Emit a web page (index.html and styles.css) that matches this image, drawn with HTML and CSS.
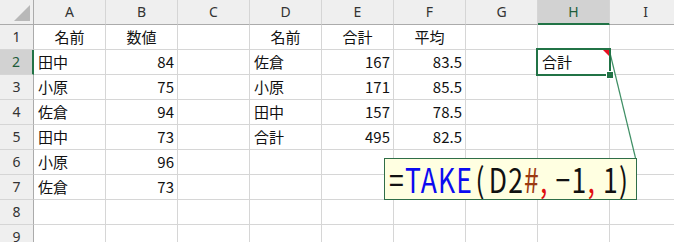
FILE: index.html
```html
<!DOCTYPE html>
<html lang="ja">
<head>
<meta charset="utf-8">
<title>TAKE</title>
<link rel="stylesheet" href="styles.css">
</head>
<body>
<div class="sheet">
  <div class="grid">
    <div class="hd corner"><span class="tri"></span></div>
    <div class="hd col">A</div>
    <div class="hd col">B</div>
    <div class="hd col">C</div>
    <div class="hd col">D</div>
    <div class="hd col">E</div>
    <div class="hd col">F</div>
    <div class="hd col">G</div>
    <div class="hd col sel-col">H</div>
    <div class="hd col">I</div>

    <div class="hd row">1</div>
    <div class="c ctr">名前</div><div class="c ctr">数値</div><div class="c"></div><div class="c ctr">名前</div><div class="c ctr">合計</div><div class="c ctr">平均</div><div class="c"></div><div class="c"></div><div class="c"></div>

    <div class="hd row sel-row">2</div>
    <div class="c">田中</div><div class="c num">84</div><div class="c"></div><div class="c">佐倉</div><div class="c num">167</div><div class="c num">83.5</div><div class="c"></div><div class="c">合計</div><div class="c"></div>

    <div class="hd row">3</div>
    <div class="c">小原</div><div class="c num">75</div><div class="c"></div><div class="c">小原</div><div class="c num">171</div><div class="c num">85.5</div><div class="c"></div><div class="c"></div><div class="c"></div>

    <div class="hd row">4</div>
    <div class="c">佐倉</div><div class="c num">94</div><div class="c"></div><div class="c">田中</div><div class="c num">157</div><div class="c num">78.5</div><div class="c"></div><div class="c"></div><div class="c"></div>

    <div class="hd row">5</div>
    <div class="c">田中</div><div class="c num">73</div><div class="c"></div><div class="c">合計</div><div class="c num">495</div><div class="c num">82.5</div><div class="c"></div><div class="c"></div><div class="c"></div>

    <div class="hd row">6</div>
    <div class="c">小原</div><div class="c num">96</div><div class="c"></div><div class="c"></div><div class="c"></div><div class="c"></div><div class="c"></div><div class="c"></div><div class="c"></div>

    <div class="hd row">7</div>
    <div class="c">佐倉</div><div class="c num">73</div><div class="c"></div><div class="c"></div><div class="c"></div><div class="c"></div><div class="c"></div><div class="c"></div><div class="c"></div>

    <div class="hd row">8</div>
    <div class="c"></div><div class="c"></div><div class="c"></div><div class="c"></div><div class="c"></div><div class="c"></div><div class="c"></div><div class="c"></div><div class="c"></div>

    <div class="hd row">9</div>
    <div class="c"></div><div class="c"></div><div class="c"></div><div class="c"></div><div class="c"></div><div class="c"></div><div class="c"></div><div class="c"></div><div class="c"></div>
  </div>

  <div class="selection"><span class="comment-mark"></span><span class="handle"></span></div>

  <svg class="connector" width="674" height="242" viewBox="0 0 674 242">
    <line x1="610" y1="53" x2="635.5" y2="158" stroke="#3f8f65" stroke-width="1.2"/>
    <line x1="610" y1="50" x2="610" y2="60" stroke="#217346" stroke-width="2"/>
  </svg>

  <div class="comment">
    <span class="formula"><span class="k">=</span><span class="fn">TAKE</span><span class="k paren">(</span><span class="k">D2</span><span class="hash">#</span><span class="sep">,</span><span class="k"> −1</span><span class="sep">,</span><span class="k"> 1)</span></span>
  </div>
</div>
</body>
</html>
```
FILE: styles.css
```css
* { box-sizing: border-box; }
html, body { margin: 0; padding: 0; background: #fff; }
body { width: 674px; height: 242px; overflow: hidden; }

.sheet {
  position: relative;
  width: 674px;
  height: 242px;
  overflow: hidden;
  font-family: "Noto Sans CJK JP", "Noto Sans", sans-serif;
  color: #111;
}

.grid {
  display: grid;
  grid-template-columns: 34px repeat(9, 72px);
  grid-template-rows: 25px repeat(9, 25px);
}

.c {
  border-right: 1px solid #d6d6d6;
  border-bottom: 1px solid #d6d6d6;
  font-size: 15px;
  line-height: 24px;
  padding: 0 4px;
  white-space: nowrap;
  overflow: hidden;
}
.c.ctr { text-align: center; }
.c.num { text-align: right; padding-right: 3px; }

.hd {
  background: #efefef;
  color: #333;
  font-family: "Noto Sans", "Liberation Sans", sans-serif;
  font-size: 14px;
  text-align: center;
  line-height: 24px;
}
.hd.col {
  border-right: 1px solid #d5d5d5;
  border-bottom: 1px solid #ababab;
}
.hd.row {
  border-right: 1px solid #ababab;
  border-bottom: 1px solid #d5d5d5;
}
.hd.corner {
  position: relative;
  border-right: 1px solid #ababab;
  border-bottom: 1px solid #ababab;
}
.tri {
  position: absolute;
  right: 3px;
  bottom: 3px;
  width: 0;
  height: 0;
  border-left: 16px solid transparent;
  border-bottom: 16px solid #b8b8b8;
}
.hd.sel-col {
  background: #d2d2d2;
  color: #1e5c3a;
  border-bottom: 2px solid #217346;
}
.hd.sel-row {
  background: #d2d2d2;
  color: #1e5c3a;
  border-right: 2px solid #217346;
}

.selection {
  position: absolute;
  left: 536px;
  top: 48px;
  width: 75px;
  height: 28px;
  border: 2px solid #217346;
}
.comment-mark {
  position: absolute;
  right: 0px;
  top: 0px;
  width: 0;
  height: 0;
  border-left: 6px solid transparent;
  border-top: 6px solid #e81123;
}
.handle {
  position: absolute;
  right: -4px;
  bottom: -4px;
  width: 6px;
  height: 6px;
  background: #217346;
  outline: 1px solid #fff;
}

.connector {
  position: absolute;
  left: 0;
  top: 0;
  pointer-events: none;
}

.comment {
  position: absolute;
  left: 384px;
  top: 158px;
  width: 253px;
  height: 42px;
  background: #ffffe1;
  border: 1px solid #2f6e48;
  overflow: hidden;
  padding-left: 4px;
}
.formula {
  display: inline-block;
  font-family: "Noto Sans CJK JP", "Noto Sans", sans-serif;
  font-size: 34px;
  line-height: 40px;
  letter-spacing: 1.5px;
  white-space: pre;
  transform: scaleX(0.78);
  transform-origin: left center;
  color: #111;
}
.paren { margin: 0 4px 0 3px; }
.fn { color: #0b0bf0; }
.hash { color: #9c3a10; }
.sep { color: #e01010; }
```
